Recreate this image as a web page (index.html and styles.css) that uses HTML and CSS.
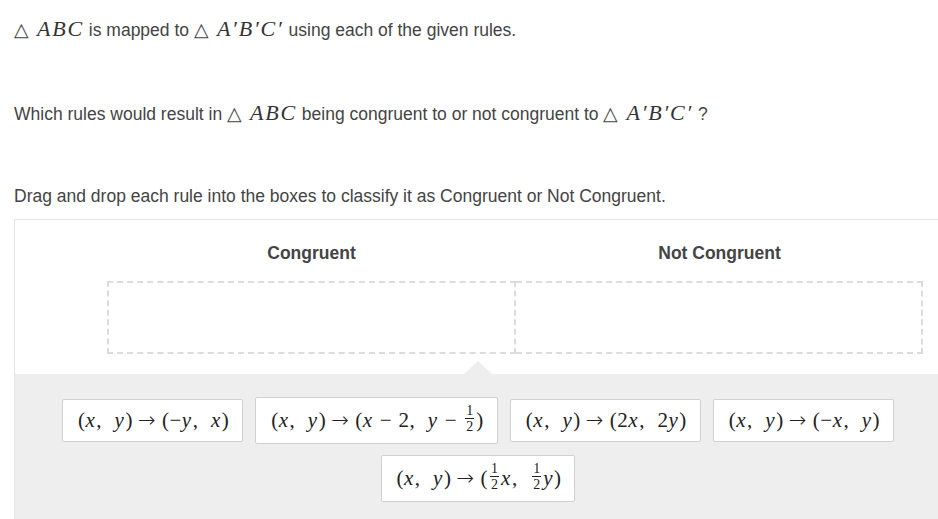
FILE: index.html
```html
<!DOCTYPE html>
<html>
<head>
<meta charset="utf-8">
<link rel="stylesheet" href="styles.css">
</head>
<body>
<div class="page">
  <p class="line"><span class="m"><span class="tri">△</span><i>ABC</i></span> is mapped to <span class="m"><span class="tri">△</span><i>A′B′C′</i></span> using each of the given rules.</p>
  <p class="line">Which rules would result in <span class="m"><span class="tri">△</span><i>ABC</i></span> being congruent to or not congruent to <span class="m"><span class="tri">△</span><i>A′B′C′</i></span> ?</p>
  <p class="line">Drag and drop each rule into the boxes to classify it as Congruent or Not Congruent.</p>

  <div class="panel">
    <div class="targets">
      <div class="col">
        <div class="col-title">Congruent</div>
        <div class="drop drop-left"></div>
      </div>
      <div class="col">
        <div class="col-title">Not Congruent</div>
        <div class="drop drop-right"></div>
      </div>
    </div>
    <div class="bank">
      <div class="chip"><span class="mx">(<i>x</i>,&nbsp; <i>y</i>)<span class="arr">→</span>(−<i>y</i>,&nbsp; <i>x</i>)</span></div>
      <div class="chip chip-tall"><span class="mx">(<i>x</i>,&nbsp; <i>y</i>)<span class="arr">→</span>(<i>x</i> − 2,&nbsp; <i>y</i> − <span class="frac"><span class="num">1</span><span class="den">2</span></span>)</span></div>
      <div class="chip"><span class="mx">(<i>x</i>,&nbsp; <i>y</i>)<span class="arr">→</span>(2<i>x</i>,&nbsp; 2<i>y</i>)</span></div>
      <div class="chip"><span class="mx">(<i>x</i>,&nbsp; <i>y</i>)<span class="arr">→</span>(−<i>x</i>,&nbsp; <i>y</i>)</span></div>
      <div class="chip chip-tall"><span class="mx">(<i>x</i>,&nbsp; <i>y</i>)<span class="arr">→</span>(<span class="frac"><span class="num">1</span><span class="den">2</span></span><i>x</i>,&nbsp; <span class="frac"><span class="num">1</span><span class="den">2</span></span><i>y</i>)</span></div>
    </div>
  </div>
</div>
</body>
</html>
```

FILE: styles.css
```css
html, body {
  margin: 0;
  padding: 0;
  overflow: hidden;
  background: #fff;
}

.page {
  padding: 17px 0 0 14px;
  font-family: "Liberation Sans", Arial, sans-serif;
  font-size: 17.5px;
  color: #444;
}

.line {
  margin: 0 0 60px 0;
  line-height: 24px;
  height: 24px;
  white-space: nowrap;
}

.line:nth-of-type(2) {
  margin-bottom: 59px;
}

.line:nth-of-type(3) {
  margin-bottom: 11px;
}

.m {
  font-family: "Liberation Serif", "Times New Roman", serif;
  font-size: 22px;
  color: #333;
}

.m i {
  font-style: italic;
  letter-spacing: 1.8px;
}

.tri {
  font-family: "DejaVu Sans", sans-serif;
  font-size: 19px;
  font-weight: 300;
  color: #444;
  margin-right: 8px;
}

.panel {
  margin-right: -4px;
  border: 1px solid #e6e6e6;
  border-bottom: none;
  background: #fff;
}

.targets {
  display: grid;
  grid-template-columns: 409px 407px;
  padding: 23px 0 20px 92px;
}

.col-title {
  text-align: center;
  font-weight: bold;
  font-size: 17.5px;
  line-height: 20px;
  color: #444;
  margin-bottom: 18px;
}

.drop {
  height: 69px;
  border: 2px dashed #dcdcdc;
}

.drop-right {
  border-left: none;
}

.bank {
  position: relative;
  background: #eeeeee;
  display: flex;
  flex-wrap: wrap;
  justify-content: center;
  align-items: center;
  gap: 11px 12px;
  padding: 23px 30px 30px 30px;
}

.bank::before {
  content: "";
  position: absolute;
  top: -13px;
  left: 50%;
  margin-left: -14px;
  border-left: 14px solid transparent;
  border-right: 14px solid transparent;
  border-bottom: 13px solid #eeeeee;
}

.chip {
  background: #fff;
  border: 1px solid #d0d0d0;
  border-radius: 2px;
  height: 41px;
  padding: 0 13px 0 15px;
  display: flex;
  align-items: center;
  box-sizing: content-box;
}

.chip-tall {
  height: 45px;
}

.mx {
  font-family: "Liberation Serif", "Times New Roman", serif;
  font-size: 21px;
  color: #222;
  white-space: nowrap;
  word-spacing: 0.5px;
  letter-spacing: 0.5px;
}

.mx i {
  font-style: italic;
  padding-right: 1px;
}

.arr {
  font-family: "DejaVu Sans", sans-serif;
  font-size: 21px;
  font-weight: 200;
  margin: 0 6px 0 5px;
}

.frac {
  display: inline-block;
  vertical-align: middle;
  text-align: center;
  font-size: 14px;
  line-height: 13px;
  letter-spacing: 0;
  margin: -6px 2px 0 2px;
}

.frac .num,
.frac .den {
  display: block;
  padding: 0 1px;
}

.frac .num {
  border-bottom: 1px solid #222;
  padding-bottom: 1px;
}

.frac .den {
  padding-top: 1px;
}
```
